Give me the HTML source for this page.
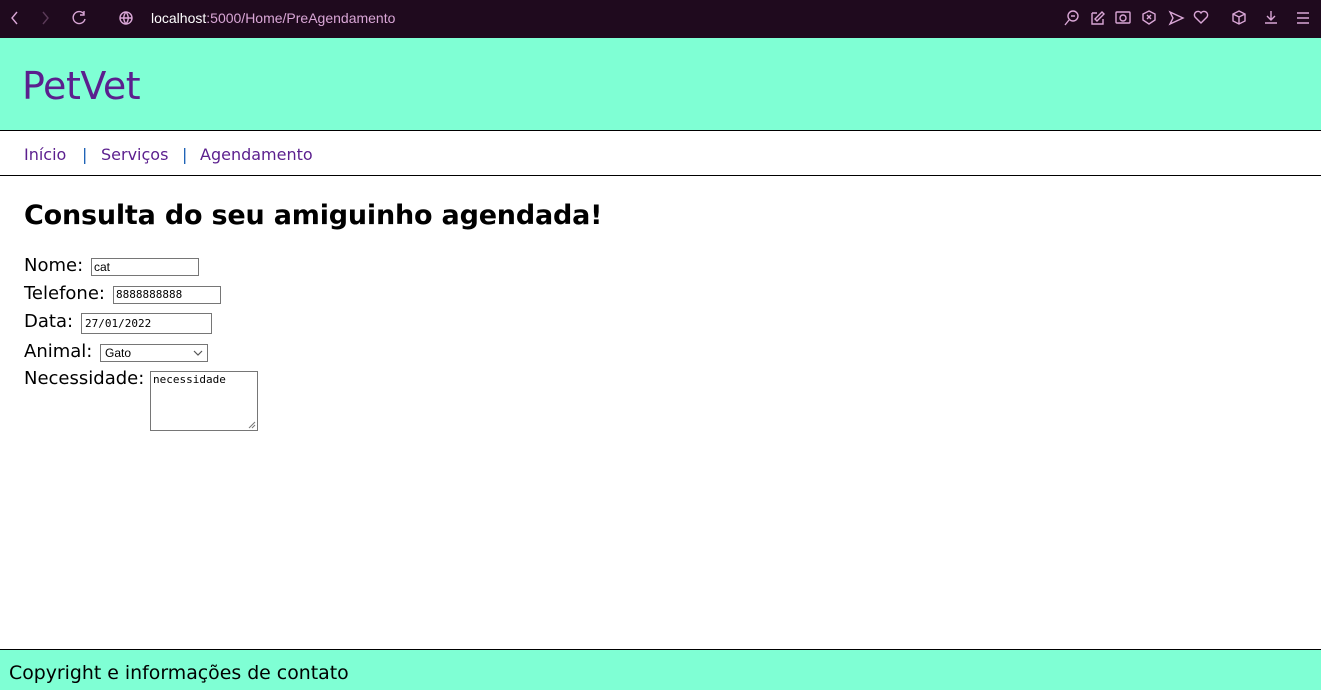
<!DOCTYPE html>
<html><head><meta charset="utf-8"><style>
*{margin:0;padding:0;box-sizing:border-box}
body{width:1321px;height:690px;overflow:hidden;background:#fff;font-family:"DejaVu Sans","Liberation Sans",sans-serif;position:relative}
.bar{position:absolute;left:0;top:0;width:1321px;height:38px;background:#1f0a1e;color:#d9a6d6}
.bar .url{position:absolute;left:151px;top:10px;font-size:14px;color:#d9a6d6;font-family:"Liberation Sans",sans-serif}
.bar .url b{color:#fff;font-weight:normal}
.hdr{position:absolute;left:0;top:38px;width:1321px;height:93px;background:#7fffd4;border-top:1px solid #7fffd4;border-bottom:1px solid #000}
.hdr h1{position:absolute;left:22px;top:25px;font-size:38px;font-weight:normal;color:#5b1f8e;letter-spacing:-0.5px}
.nav{position:absolute;top:145px;font-size:16px;color:#5b1f8e;white-space:pre}
.sep{color:#1a5fb4}
.line2{position:absolute;left:0;top:175px;width:1321px;height:1px;background:#000}
h2{position:absolute;left:24px;top:200px;font-size:27px;font-weight:bold;white-space:nowrap;letter-spacing:-0.2px}
.f{position:absolute;left:24px;font-size:18px;white-space:nowrap}
.in{position:absolute;border:1px solid #767676;background:#fff;font-size:12px;padding-left:2px;line-height:16px}
.foot{position:absolute;left:0;top:649px;width:1321px;height:41px;background:#7fffd4;border-top:1px solid #000}
.foot div{position:absolute;left:9px;top:12px;font-size:18.9px}
svg{position:absolute}
</style></head><body>
<div class="bar">
<svg width="1321" height="38" fill="none" stroke="#d9a6d6" stroke-width="1.4">
<path d="M17 12l-5 6 5 6"/><path d="M43 12l5 6-5 6" stroke="#5a3a58"/>
<path d="M84 14a6 6 0 1 0 1 5M84 11v4h-4"/>
<circle cx="126" cy="18" r="6"/><path d="M120 18h12M126 12c-3 4-3 8 0 12M126 12c3 4 3 8 0 12"/>
<circle cx="1073" cy="16" r="5"/><path d="M1069 20l-4 5M1071 16h4"/>
<path d="M1092 13h5M1092 13v11h11v-5M1097 21l7-7-2-2-7 7z"/>
<rect x="1116" y="12" width="14" height="11" rx="1"/><circle cx="1123" cy="18" r="3"/>
<path d="M1149 11l6 3v6l-6 4-6-4v-6z"/><path d="M1147 15l4 4M1151 15l-4 4"/>
<path d="M1170 12l13 6-13 6 3-6z"/>
<path d="M1201 23l-6-6a3 3 0 0 1 6-4 3 3 0 0 1 6 4z"/>
<path d="M1239 11l6 3v7l-6 3-6-3v-7zM1233 14l6 3 6-3M1239 17v7"/>
<path d="M1271 11v9M1267 16l4 4 4-4M1265 23h12"/>
<path d="M1297 13h12M1297 18h12M1297 23h12"/>
</svg>
<div class="url"><b>localhost</b>:5000/Home/PreAgendamento</div>
</div>
<div class="hdr"><h1>PetVet</h1></div>
<div class="nav" style="left:24px">Início</div>
<div class="nav sep" style="left:82px">|</div>
<div class="nav" style="left:101px">Serviços</div>
<div class="nav sep" style="left:182px">|</div>
<div class="nav" style="left:200px">Agendamento</div>
<div class="line2"></div>
<h2>Consulta do seu amiguinho agendada!</h2>
<div class="f" style="top:255px">Nome:</div><div class="in" style="left:91px;top:258px;width:108px;height:18px;font-family:'Liberation Sans',sans-serif">cat</div>
<div class="f" style="top:283px">Telefone:</div><div class="in" style="left:113px;top:286px;width:108px;height:18px;font-family:'DejaVu Sans Mono',monospace;font-size:11px">8888888888</div>
<div class="f" style="top:311px">Data:</div><div class="in" style="left:81px;top:313px;width:131px;height:21px;font-family:'DejaVu Sans Mono',monospace;font-size:11px;padding-left:3px;line-height:19px">27/01/2022</div>
<div class="f" style="top:341px">Animal:</div><div class="in" style="left:100px;top:344px;width:108px;height:18px;font-family:'Liberation Sans',sans-serif;padding-left:4px">Gato</div>
<svg width="12" height="8" style="left:193px;top:349px" fill="none" stroke="#555" stroke-width="1.2"><path d="M1 2l4 4 4-4"/></svg>
<div class="f" style="top:368px">Necessidade:</div><div class="in" style="left:150px;top:371px;width:108px;height:60px;font-family:'DejaVu Sans Mono',monospace;font-size:11px;line-height:15px">necessidade</div>
<svg width="8" height="8" style="left:248px;top:421px" stroke="#777"><path d="M7 1L1 7M7 4L4 7"/></svg>
<div class="foot"><div>Copyright e informações de contato</div></div>
</body></html>
